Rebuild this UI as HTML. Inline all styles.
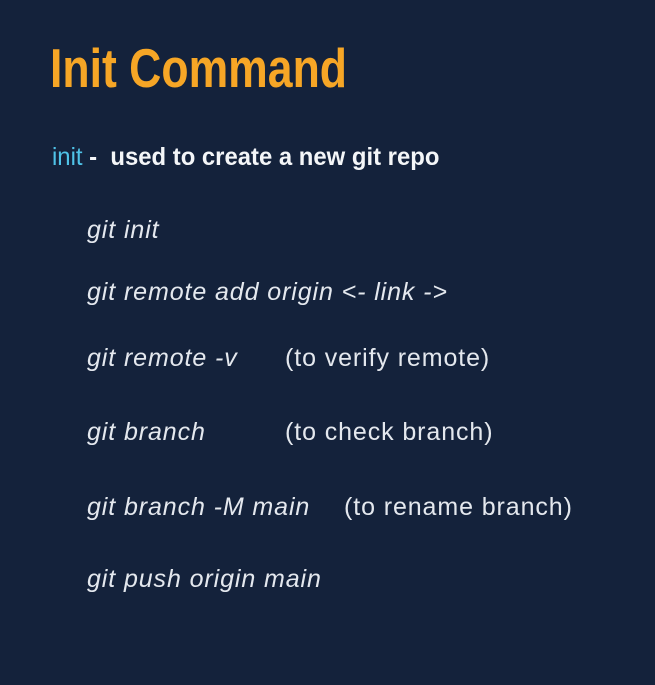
<!DOCTYPE html>
<html><head><style>
html,body{margin:0;padding:0}
body{width:655px;height:685px;background:#14223b;position:relative;overflow:hidden;font-family:"Liberation Sans",sans-serif}
.a{position:absolute;white-space:nowrap;line-height:1;transform-origin:0 0}
.t{left:50px;top:41px;font-weight:bold;font-size:55px;color:#f6a626;transform:scaleX(0.81)}
.s{left:52px;top:145px;font-weight:bold;font-size:25px;color:#f4f6f8;transform:scaleX(0.955)}
.s b{color:#4fc3e8;font-weight:normal}
.c{left:87px;font-style:italic;font-size:25px;letter-spacing:0.9px;color:#e4e8ee}
</style></head><body>
<div class="a t">Init Command</div>
<div class="a s"><b>init</b> -&nbsp; used to create a new git repo</div>
<div class="a c" style="top:218px">git init</div>
<div class="a c" style="top:280px">git remote add origin &lt;- link -&gt;</div>
<div class="a c" style="top:346px">git remote -v</div>
<div class="a c" style="top:346px;left:285px;font-style:normal">(to verify remote)</div>
<div class="a c" style="top:420px">git branch</div>
<div class="a c" style="top:420px;left:285px;font-style:normal">(to check branch)</div>
<div class="a c" style="top:495px">git branch -M main</div>
<div class="a c" style="top:495px;left:344px;font-style:normal">(to rename branch)</div>
<div class="a c" style="top:567px">git push origin main</div>
</body></html>
